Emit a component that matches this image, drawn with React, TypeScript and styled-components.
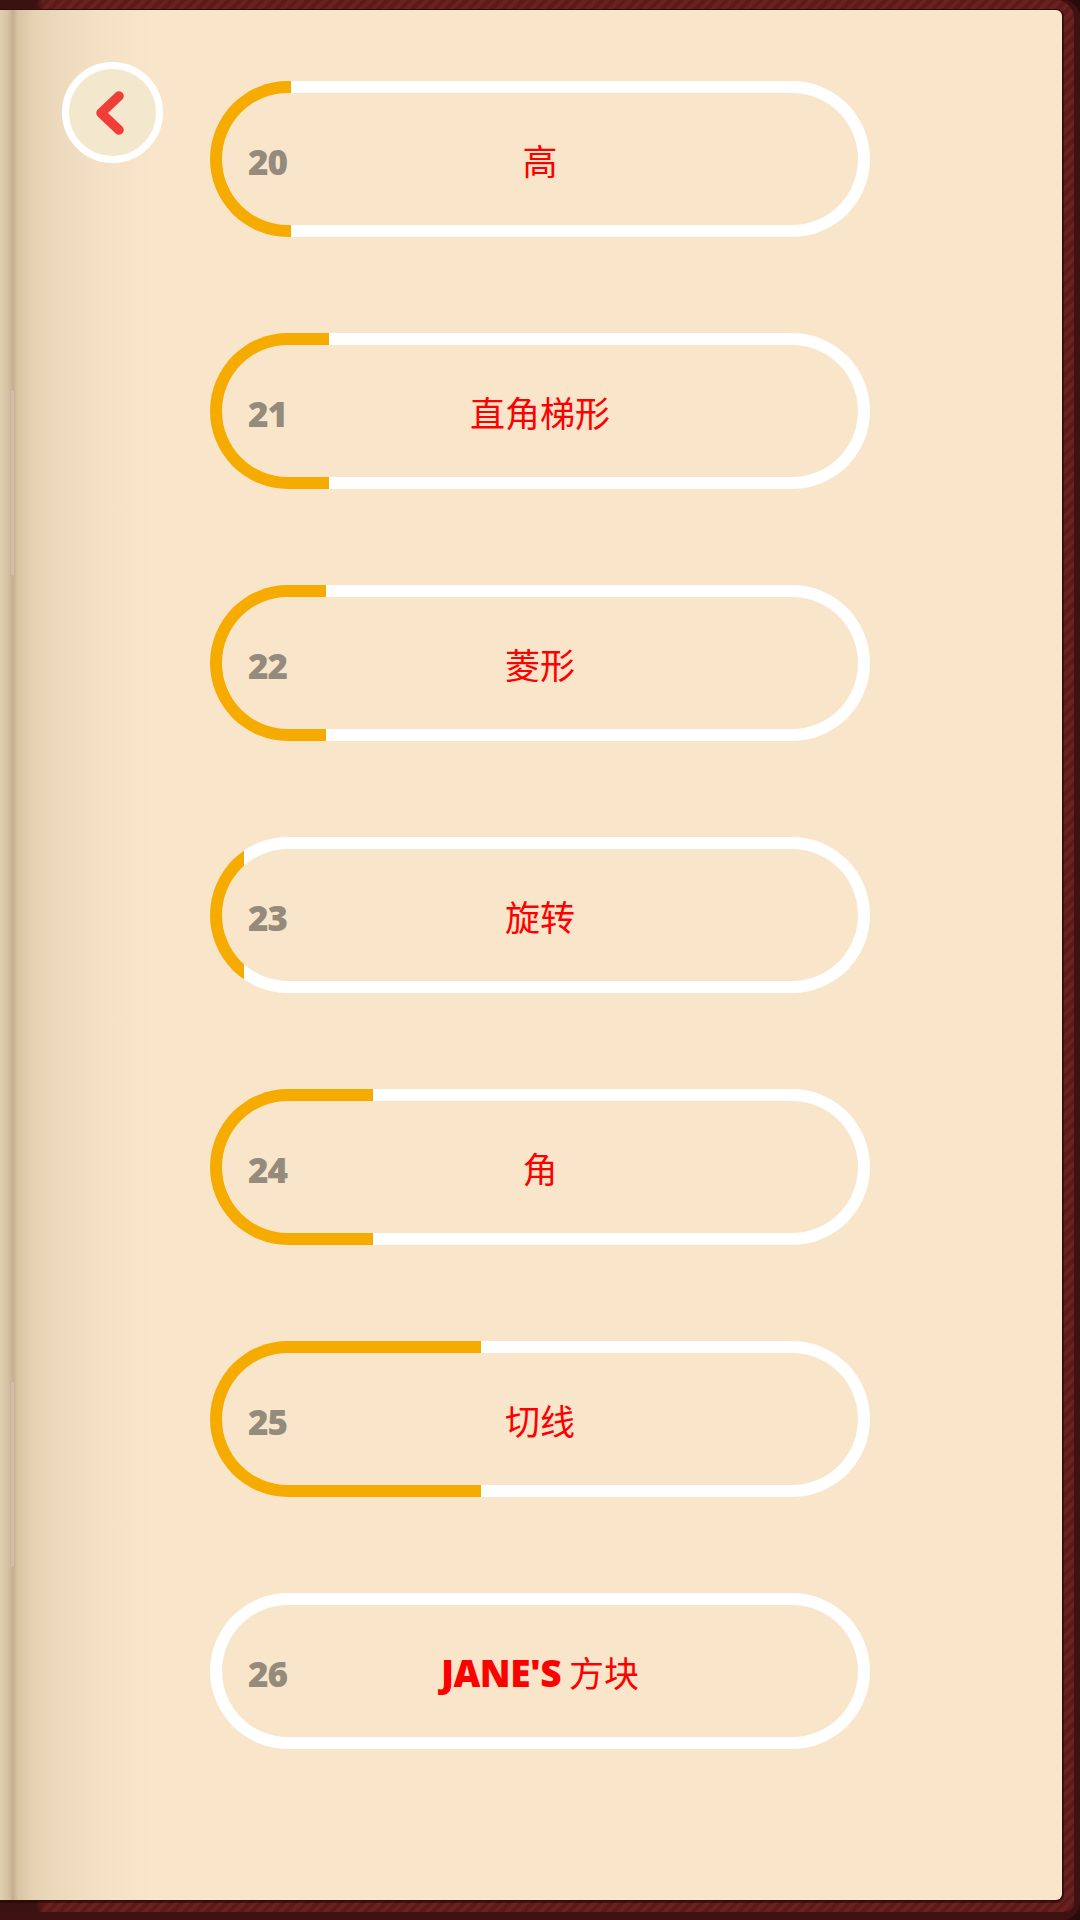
import React from "react";
import styled, { createGlobalStyle } from "styled-components";

const GlobalStyle = createGlobalStyle`
  html, body { margin: 0; padding: 0; background: #2a0b0b; }
  body { font-family: "Open Sans", "Noto Sans CJK SC", sans-serif; }
  * { box-sizing: border-box; }
`;

const Frame = styled.div`
  position: relative;
  width: 1080px;
  height: 1920px;
  padding: 10px 18px 20px 0;
  background:
    linear-gradient(to right, #3a1210 0, #3a1210 36px, rgba(58, 18, 16, 0) 44px),
    repeating-linear-gradient(135deg, #5c1a19 0 4px, #6a2221 4px 8px);
  border-radius: 0 18px 18px 0;
  box-shadow: inset -6px 0 0 #3d1210, inset 0 -8px 0 #3d1210;
  overflow: hidden;
`;

const Page = styled.div`
  position: relative;
  height: 100%;
  display: flex;
  align-items: flex-start;
  border-radius: 0 6px 6px 0;
  background: linear-gradient(
    to right,
    #e1cfb1 0px,
    #d6c2a3 8px,
    #c4af90 13px,
    #d9c4a4 18px,
    #e6d3b4 34px,
    #eddabd 60px,
    #f4e0c4 100px,
    #f9e6ca 150px
  );
  box-shadow: 0 0 0 1px #2e0c0a, 0 1px 0 2px rgba(30, 6, 6, 0.5);
`;

const SpineLine = styled.div<{ $top: number }>`
  position: absolute;
  left: 11px;
  top: ${(p) => p.$top}px;
  width: 3px;
  height: 186px;
  border-radius: 2px;
  background: #d3bcaa;
  box-shadow: 0 0 1px rgba(160, 130, 110, 0.6);
`;

const BackButton = styled.button`
  flex: none;
  margin: 52px 0 0 62px;
  width: 101px;
  height: 101px;
  border-radius: 50%;
  border: 7px solid #ffffff;
  background: #f3e7cd;
  display: flex;
  align-items: center;
  justify-content: center;
  padding: 0 6px 0 0;
  cursor: pointer;
`;

const List = styled.div`
  display: flex;
  flex-direction: column;
  gap: 96px;
  margin: 71px 0 0 47px;
`;

const Pill = styled.div<{ $progress: number }>`
  width: 660px;
  height: 156px;
  border: 12px solid transparent;
  border-radius: 78px;
  background:
    linear-gradient(#f9e6ca, #f9e6ca) padding-box,
    linear-gradient(
        to right,
        #f6ab00 0 ${(p) => p.$progress}px,
        #ffffff ${(p) => p.$progress}px
      )
      border-box;
  display: grid;
  grid-template-columns: 1fr auto 1fr;
  align-items: center;
  padding: 4px 26px 0 26px;
`;

const Num = styled.span`
  justify-self: start;
  font-family: "Open Sans", sans-serif;
  font-weight: 800;
  font-size: 35px;
  color: #958b7d;
  letter-spacing: -1px;
`;

const Label = styled.span`
  justify-self: center;
  margin-top: -3px;
  font-family: "Noto Sans CJK SC", "Noto Sans", sans-serif;
  font-weight: 400;
  font-size: 35px;
  color: #ff0000;
  white-space: nowrap;
`;

const Latin = styled.span`
  font-family: "Open Sans", sans-serif;
  font-weight: 800;
  font-size: 37px;
  letter-spacing: -0.5px;
`;

const items: { n: number; label: React.ReactNode; progress: number }[] = [
  { n: 20, label: "高", progress: 81 },
  { n: 21, label: "直角梯形", progress: 119 },
  { n: 22, label: "菱形", progress: 116 },
  { n: 23, label: "旋转", progress: 34 },
  { n: 24, label: "角", progress: 163 },
  { n: 25, label: "切线", progress: 271 },
  {
    n: 26,
    label: (
      <>
        <Latin>JANE'S</Latin> 方块
      </>
    ),
    progress: 0,
  },
];

export default function App() {
  return (
    <>
      <GlobalStyle />
      <Frame>
        <Page>
          <SpineLine $top={380} />
          <SpineLine $top={1371} />
          <BackButton aria-label="back">
            <svg width="30" height="46" viewBox="0 0 30 46">
              <path
                d="M24 6 L6 23 L24 40"
                fill="none"
                stroke="#ef3e38"
                strokeWidth="9.5"
                strokeLinecap="round"
                strokeLinejoin="round"
              />
            </svg>
          </BackButton>
          <List>
            {items.map((it) => (
              <Pill key={it.n} $progress={it.progress}>
                <Num>{it.n}</Num>
                <Label>{it.label}</Label>
                <span />
              </Pill>
            ))}
          </List>
        </Page>
      </Frame>
    </>
  );
}
